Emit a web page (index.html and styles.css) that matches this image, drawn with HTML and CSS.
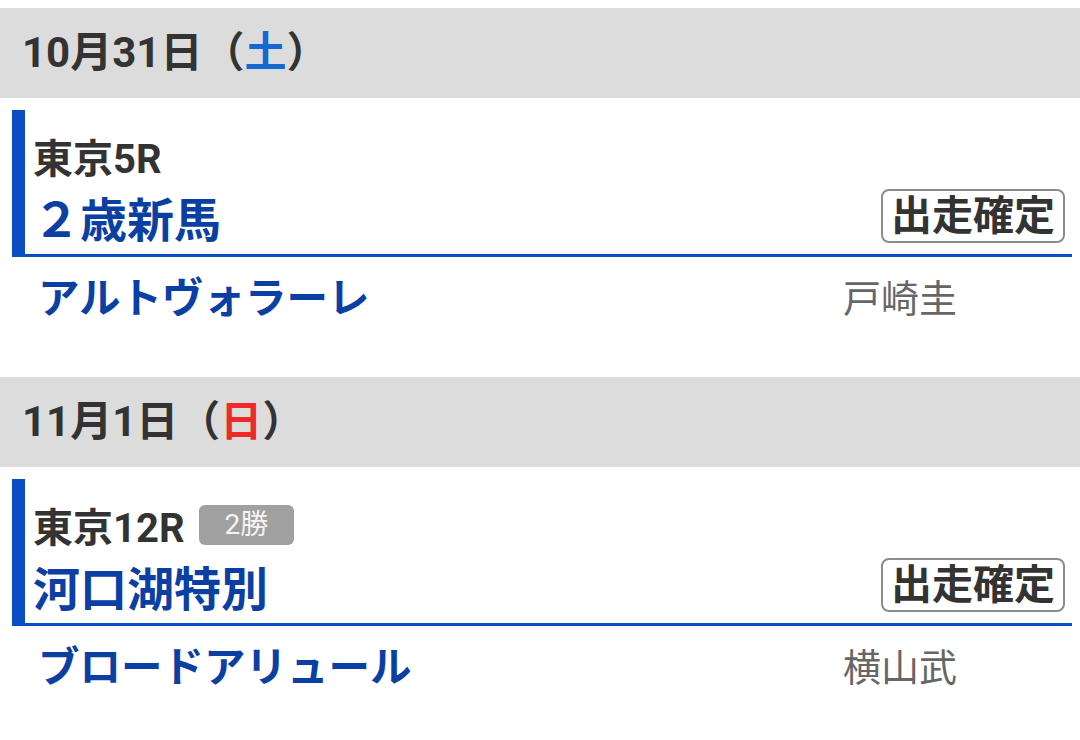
FILE: index.html
```html
<!DOCTYPE html>
<html lang="ja">

<head>
    <meta charset="UTF-8">
    <meta name="viewport" content="width=device-width, initial-scale=1.0">
    <title>出走予定</title>
    <link rel="stylesheet" href="styles.css">
</head>

<body>

    <div class="day">
        <div class="day-header">10月31日（<span class="sat">土</span>）</div>

        <div class="race">
            <div class="race-head">
                <span class="race-place">東京5R</span>
            </div>
            <div class="race-row">
                <span class="race-name">２歳新馬</span>
                <span class="status">出走確定</span>
            </div>
        </div>
        <div class="entry">
            <span class="horse">アルトヴォラーレ</span>
            <span class="jockey">戸崎圭</span>
        </div>
    </div>

    <div class="day">
        <div class="day-header">11月1日（<span class="sun">日</span>）</div>

        <div class="race">
            <div class="race-head">
                <span class="race-place">東京12R</span>
                <span class="grade">2勝</span>
            </div>
            <div class="race-row">
                <span class="race-name">河口湖特別</span>
                <span class="status">出走確定</span>
            </div>
        </div>
        <div class="entry">
            <span class="horse">ブロードアリュール</span>
            <span class="jockey">横山武</span>
        </div>
    </div>

</body>

</html>
```

FILE: styles.css
```css
* {
    margin: 0;
    padding: 0;
    box-sizing: border-box;
}

body {
    font-family: Roboto, "Noto Sans CJK JP", sans-serif;
    background-color: #ffffff;
    color: #333333;
    padding-top: 8px;
}

.day {
    margin-bottom: 36px;
}

.day-header {
    height: 90px;
    background-color: #dcdcdc;
    padding: 0 0 10px 22px;
    display: flex;
    align-items: center;
    font-size: 42px;
    font-weight: bold;
    color: #333333;
}

.sat {
    color: #1468d2;
}

.sun {
    color: #ec2a2a;
}

.race {
    margin: 12px 8px 0 12px;
    border-left: 13px solid #0a4ec6;
    border-bottom: 3px solid #0a4ec6;
    padding: 22px 7px 0 8px;
}

.race-head {
    height: 48px;
    display: flex;
    align-items: center;
}

.race-place {
    font-size: 40px;
    font-weight: bold;
    color: #333333;
}

.grade {
    margin-left: 14px;
    background-color: #a0a0a0;
    color: #f4f4f4;
    font-size: 28px;
    line-height: 40px;
    padding: 0 26px;
    border-radius: 6px;
}

.race-row {
    height: 74px;
    padding-bottom: 2px;
    display: flex;
    align-items: center;
    justify-content: space-between;
}

.race-name {
    font-size: 47px;
    font-weight: bold;
    color: #0b3fa3;
}

.status {
    border: 2px solid #8c8c8c;
    border-radius: 8px;
    padding: 0 8px;
    font-size: 41px;
    line-height: 50px;
    font-weight: bold;
    color: #333333;
}

.entry {
    height: 84px;
    display: flex;
    align-items: center;
    padding: 0 12px 8px 38px;
}

.horse {
    flex: 1;
    font-size: 41.5px;
    font-weight: bold;
    color: #0b3fa3;
}

.jockey {
    width: 225px;
    font-size: 38px;
    color: #666666;
}
```
